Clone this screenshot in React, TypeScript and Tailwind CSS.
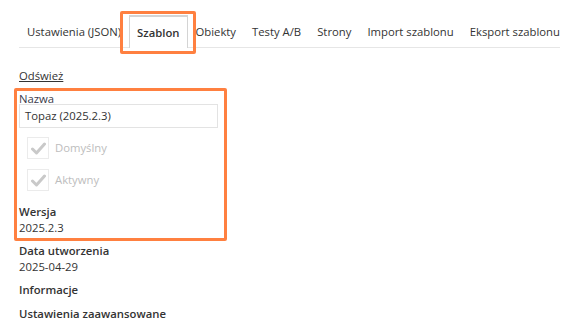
import React from 'react';

const tabs = ['Ustawienia (JSON)', 'Szablon', 'Obiekty', 'Testy A/B', 'Strony', 'Import szablonu', 'Eksport szablonu'];

const Check: React.FC<{ label: string }> = ({ label }) => (
  <div className="flex items-center h-[32px] pl-[8px]">
    <span className="w-[22px] h-[22px] border border-[#ebebeb] flex items-center justify-center">
      <svg width="15" height="13" viewBox="0 0 15 13">
        <path d="M1.5 7 L5.5 11 L13.5 2" fill="none" stroke="#c9c9c9" strokeWidth="3" strokeLinecap="round" strokeLinejoin="round" />
      </svg>
    </span>
    <span className="ml-[6px] text-[#bdbdbd]">{label}</span>
  </div>
);

export default function App() {
  return (
    <div className="w-[562px] h-[325px] bg-white text-[11.3px] leading-[16px] text-[#333] overflow-hidden" style={{ fontFamily: '"Open Sans", sans-serif' }}>
      <div className="pt-[15px] pl-[19px] pr-[2px]">
        <div className="flex h-[33px] border-b border-[#e6e6e6] whitespace-nowrap">
          {tabs.map((t) =>
            t === 'Szablon' ? (
              <div key={t} className="relative flex shrink-0">
                <span className="flex items-center px-[7px] h-[33px] border-t-2 border-x border-[#d4d4d4] bg-white font-semibold mb-[-1px]">{t}</span>
                <span className="absolute left-[-9px] right-[-8px] top-[-4px] bottom-[-7px] border-[3px] border-[#ff8040] rounded-[2px]" />
              </div>
            ) : (
              <span key={t} className="flex items-center shrink-0 px-[8px] pt-[2px]">{t}</span>
            )
          )}
        </div>
      </div>
      <div className="pl-[19px] pt-[20px]">
        <a className="underline block h-[16px]">Odśwież</a>
        <div className="mt-[4px] ml-[-5px] w-[213px] border-[3px] border-[#ff8040] rounded-[2px] pl-[2px] pr-[6px] pb-[2px]">
          <div className="text-[#3a3a4a]">Nazwa</div>
          <div className="mt-[-3px] h-[24px] border border-[#e3e3e3] flex items-center px-[5px]">Topaz (2025.2.3)</div>
          <div className="mt-[4px]">
            <Check label="Domyślny" />
            <Check label="Aktywny" />
          </div>
          <div className="mt-[8px] font-semibold">Wersja</div>
          <div>2025.2.3</div>
        </div>
        <div className="mt-[2px] font-semibold">Data utworzenia</div>
        <div>2025-04-29</div>
        <div className="mt-[7px] font-semibold">Informacje</div>
        <div className="mt-[8px] font-semibold">Ustawienia zaawansowane</div>
      </div>
    </div>
  );
}
